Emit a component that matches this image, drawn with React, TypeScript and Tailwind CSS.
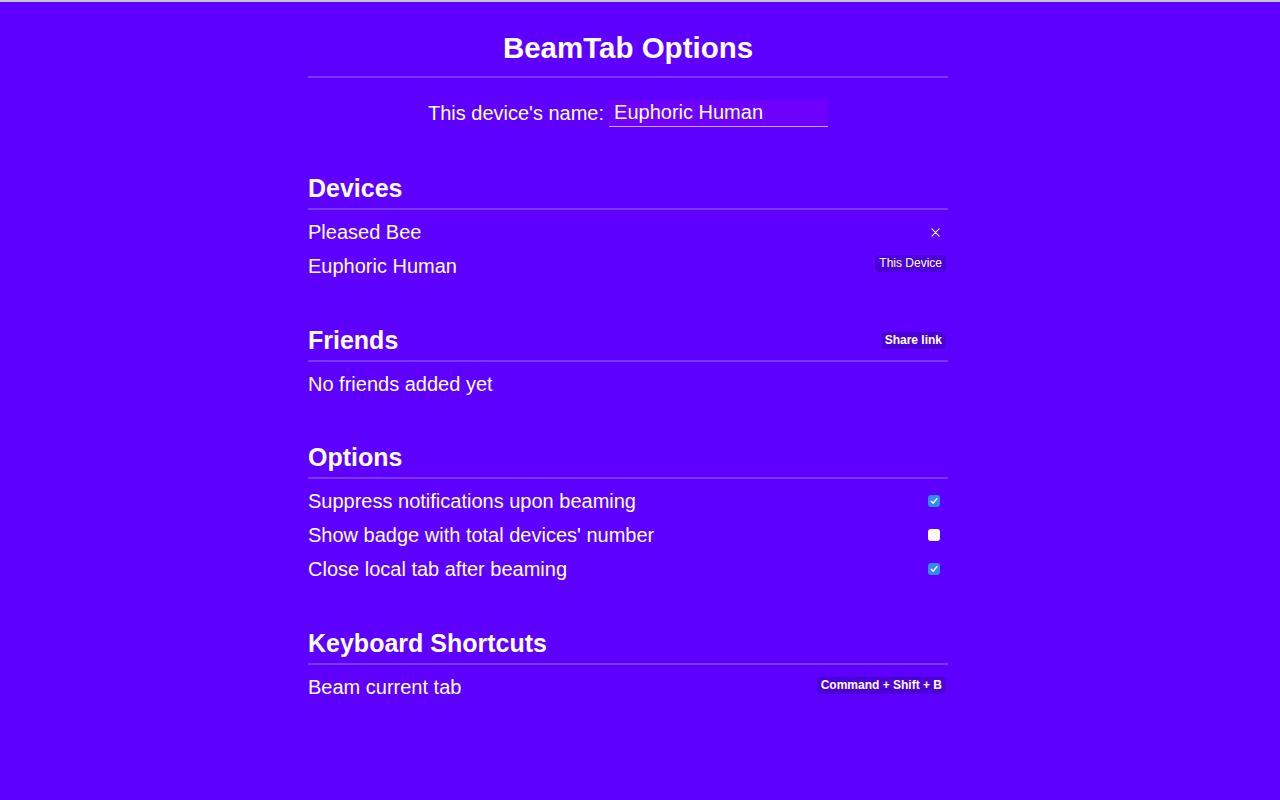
import { FC, ReactNode } from "react"

const font = { fontFamily: '"Liberation Sans", Arial, Helvetica, sans-serif' }

// Small dark pill used for labels like "This Device"
const Badge: FC<{ children: ReactNode; bold?: boolean }> = ({ children, bold }) => (
  <span
    className={`mr-[2px] rounded-[4px] bg-[#4c00d8] px-[4px] text-[12px] leading-[17px] text-white ${
      bold ? "font-bold" : "font-normal"
    }`}
  >
    {children}
  </span>
)

const Checkbox: FC<{ checked: boolean }> = ({ checked }) =>
  checked ? (
    <span className="mr-[8px] flex h-[12px] w-[12px] items-center justify-center rounded-[3px] bg-[#2f8cf5]">
      <svg viewBox="0 0 12 12" className="h-[12px] w-[12px]">
        <path d="M3.2 6.3 L5.1 8.2 L8.9 3.6" fill="none" stroke="white" strokeWidth="1.4" strokeLinecap="round" strokeLinejoin="round" />
      </svg>
    </span>
  ) : (
    <span className="mr-[8px] block h-[12px] w-[12px] rounded-[3px] bg-white" />
  )

const SectionHeading: FC<{ title: string; right?: ReactNode }> = ({ title, right }) => (
  <div className="flex items-center justify-between border-b-2 border-[#7d38ff] pb-[5px]">
    <h2 className="text-[25px] font-bold leading-[30px] text-white">{title}</h2>
    {right}
  </div>
)

const Row: FC<{ label: string; right?: ReactNode; align?: string }> = ({ label, right, align = "items-center" }) => (
  <div className={`flex h-[34px] justify-between ${align}`}>
    <span className="text-[20px] leading-[34px]">{label}</span>
    {right}
  </div>
)

export default function App() {
  return (
    <div className="min-h-[800px] w-full border-t-2 border-[#c4c4c4] bg-[#5e00ff] pr-[24px] text-white" style={font}>
      <div className="mx-auto w-[640px] pt-[31px]">
        {/* Title */}
        <h1 className="border-b-2 border-[#7d38ff] pb-[13px] text-center text-[29.5px] font-bold leading-[30px]">
          BeamTab Options
        </h1>

        {/* Device name */}
        <div className="mt-[21px] flex items-center justify-center gap-[5px]">
          <span className="text-[20px] leading-[28px]">This device's name:</span>
          <input
            defaultValue="Euphoric Human"
            className="h-[27px] w-[219px] border-b border-[#c6a8ff] bg-[#6d00ff] px-[5px] text-[20px] leading-[26px] text-white outline-none"
            style={font}
          />
        </div>

        {/* Devices */}
        <section className="mt-[46px]">
          <SectionHeading title="Devices" />
          <div className="mt-[5px]">
            <Row
              label="Pleased Bee"
              right={
                <svg viewBox="0 0 10 10" className="mr-[8px] h-[9px] w-[9px]">
                  <path d="M1 1 L9 9 M9 1 L1 9" stroke="white" strokeWidth="1.2" strokeLinecap="round" />
                </svg>
              }
            />
            <Row
              label="Euphoric Human"
              align="items-start"
              right={
                <span className="mt-[6px] flex">
                  <Badge>This Device</Badge>
                </span>
              }
            />
          </div>
        </section>

        {/* Friends */}
        <section className="mt-[42px]">
          <SectionHeading title="Friends" right={<Badge bold>Share link</Badge>} />
          <div className="mt-[5px]">
            <Row label="No friends added yet" />
          </div>
        </section>

        {/* Options */}
        <section className="mt-[41px]">
          <SectionHeading title="Options" />
          <div className="mt-[5px]">
            <Row label="Suppress notifications upon beaming" right={<Checkbox checked />} />
            <Row label="Show badge with total devices' number" right={<Checkbox checked={false} />} />
            <Row label="Close local tab after beaming" right={<Checkbox checked />} />
          </div>
        </section>

        {/* Keyboard Shortcuts */}
        <section className="mt-[42px]">
          <SectionHeading title="Keyboard Shortcuts" />
          <div className="mt-[5px]">
            <Row
              label="Beam current tab"
              align="items-start"
              right={
                <span className="mt-[7px] flex">
                  <Badge bold>Command + Shift + B</Badge>
                </span>
              }
            />
          </div>
        </section>
      </div>
    </div>
  )
}
